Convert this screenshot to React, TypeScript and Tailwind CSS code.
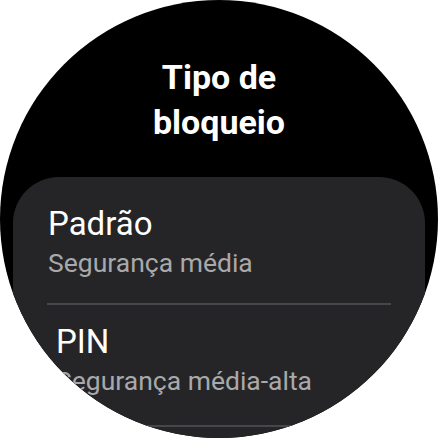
import React from 'react'

const items = [
  { title: 'Padrão', sub: 'Segurança média', pad: 'pl-[35px] pb-[23px]' },
  { title: 'PIN', sub: 'Segurança média-alta', pad: 'pl-[43px] pt-[17px] pb-[27px]' },
]

export default function App() {
  return (
    <div className="w-[438px] h-[438px] bg-white" style={{ fontFamily: 'Roboto, "Noto Sans", sans-serif' }}>
      <div className="w-[438px] h-[438px] rounded-full bg-black overflow-hidden flex flex-col">
        <h1 className="pt-[55px] text-center text-white font-bold text-[34px] leading-[45px]">
          Tipo de
          <br />
          bloqueio
        </h1>

        <div className="mt-[32px] mx-[13px] rounded-[46px] bg-[#252527] pt-[27px] pb-10">
          {items.map((item, i) => (
            <div key={item.title}>
              {i > 0 && <div className="mx-[34px] h-[2px] bg-[#47474b]" />}
              <div className={item.pad}>
                <div className="text-white text-[33px] leading-[40px]">{item.title}</div>
                <div className="text-[#a9a9ab] text-[26.5px] leading-[34px] mt-[2px]">{item.sub}</div>
              </div>
            </div>
          ))}
          <div className="mx-[34px] h-[2px] bg-[#47474b]" />
        </div>
      </div>
    </div>
  )
}
